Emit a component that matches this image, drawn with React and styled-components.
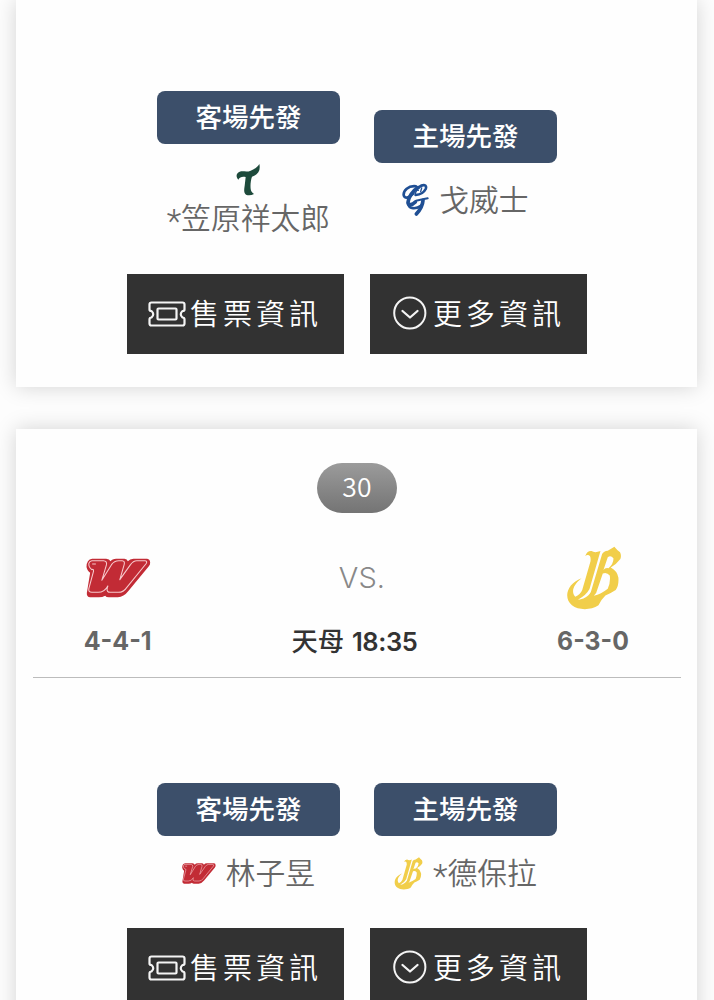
import React from 'react'
import styled, { createGlobalStyle } from 'styled-components';

const GlobalStyle = createGlobalStyle`
  html, body {
    margin: 0;
    background: #fdfdfd;
  }

  * {
    box-sizing: border-box;
  }
`;

// team logos
function Dragons() {
  return (
    <Logo w={24} h={32} viewBox="289 250 72 96">
      <path fill="#1d4a3b" d="M359 250 C363 267 357 282 337 288 C332 301 331 324 335 332 Q338 337 343 340 Q330 347 319 342 C312 337 313 328 315 315 L318 289 C307 287 301 289 296 297 C288 288 289 277 300 273 C310 270 322 275 333 270 C346 265 354 259 359 250Z" />
    </Logo>
  )
}

function Guardians() {
  return (
    <Logo w={27} h={34} viewBox="128 249 81 102">
      <g fill="none" stroke="#1f4f94" strokeLinecap="round" strokeLinejoin="round">
        <path strokeWidth="8" d="M170 259 C146 256 132 273 133 285 C135 298 150 294 162 280" />
        <path strokeWidth="11" d="M176 263 C159 273 147 293 146 307 C147 317 158 316 168 306" />
        <path strokeWidth="8" d="M178 262 C193 251 204 255 199 267 C194 277 181 284 169 285" />
        <path strokeWidth="4" d="M168 285 C168 274 174 268 177 271 M184 275 L187 264" />
        <path strokeWidth="6" d="M170 302 Q186 299 205 295" />
        <path strokeWidth="11" d="M191 301 C190 317 183 329 171 342" />
        <path strokeWidth="8" d="M146 311 C150 328 169 328 186 317" />
      </g>
    </Logo>
  )
}

function Dragon({ w, h }) {
  return (
    <Logo w={w} h={h} viewBox="79 84 194 120">
      <path fill="#c22b35" d="M97 86 H139 Q149 87 152 94 Q157 86 169 86 H194 Q202 87 204 94 Q210 86 221 86 H262 Q271 87 271 98 Q271 104 267 109 L205 184 Q192 201 174 202 H147 Q139 202 136 197 Q128 202 117 202 H91 Q80 201 81 189 L91 128 Q83 124 80 111 Q80 88 97 86Z" />
      <path fill="none" stroke="#f7c9cc" strokeWidth="3.200" strokeLinejoin="round" d="M96 92 H131 Q142 93 140 104 L126 151 L155 104 Q163 92 177 92 H187 Q196 93 193 104 L180 149 L212 104 Q220 92 231 92 H256 Q264 94 258 102 L201 172 Q191 187 176 187 H151 Q140 187 142 175 L144 168 Q134 187 115 187 H96 Q85 187 87 176 L101 124 Q102 116 96 119 Q86 111 87 100 Q89 93 96 92Z M97 102 H108" />
    </Logo>
  )
}

function Brothers({ w, h }) {
  return (
    <Logo w={w} h={h} viewBox="77 45 167 193">
      <path fill="#f1ce4a" fillRule="evenodd" d="M134 76 Q139 59 153 60 Q163 67 180 60 L147 175 Q137 194 112 207 C127 207 143 198 151 184 L185 69 Q190 60 202 59 L222 47 Q229 56 239 64 Q244 74 240 84 Q226 102 211 110 Q231 121 234 140 Q236 164 226 178 Q211 188 195 194 Q183 205 174 224 C150 240 113 239 94 224 C67 201 79 158 123 142 C97 162 91 184 104 198 Q119 192 125 178 L150 91 Q152 74 143 72 Q138 71 134 76Z M202 79 L189 117 Q194 110 204 112 Q220 98 219 82 Q211 72 202 79Z M187 128 L167 187 L160 195 Q182 190 202 174 Q211 153 208 134 Q199 123 187 128Z" />
    </Logo>
  )
}

function TicketIcon() {
  return (
    <Logo w={38} h={27} viewBox="0 0 38 27">
      <g fill="none" stroke="#f4f4f4" strokeWidth="2.200" strokeLinejoin="round">
        <path d="M3.500 1.500 H34.500 Q36.500 1.500 36.500 3.500 V8.500 Q36.500 10 34.500 10 Q31 13 34.500 16.500 Q36.500 16.500 36.500 18.500 V22.500 Q36.500 24.500 34.500 24.500 H3.500 Q1.500 24.500 1.500 22.500 V18.500 Q1.500 16.500 3.500 16.500 Q7 13 3.500 10 Q1.500 10 1.500 8.500 V3.500 Q1.500 1.500 3.500 1.500Z" />
        <rect x="9.500" y="7.500" width="19" height="11" rx="1" />
      </g>
    </Logo>
  )
}

function MoreIcon() {
  return (
    <Logo w={34} h={36} viewBox="0 0 34 36">
      <circle cx="16.800" cy="17" r="15.600" fill="none" stroke="#f4f4f4" strokeWidth="2" />
      <path d="M9.500 15 L17 21.500 L24.500 15" fill="none" stroke="#f4f4f4" strokeWidth="2.300" strokeLinecap="round" strokeLinejoin="round" />
    </Logo>
  )
}

function Starter(props) {
  return (
    <StarterColumn>
      <Pill>{props.label}</Pill>
      <Player $stacked={props.stacked}>
        {props.logo}
        <PlayerName>{props.star && <Star>*</Star>}{props.name}</PlayerName>
      </Player>
    </StarterColumn>
  )
}

function Actions() {
  return (
    <ButtonRow>
      <DarkButton><TicketIcon /><ButtonText $gap={4}>售票資訊</ButtonText></DarkButton>
      <DarkButton><MoreIcon /><ButtonText $gap={6}>更多資訊</ButtonText></DarkButton>
    </ButtonRow>
  )
}

function App() {
  return (
    <Page>
      <GlobalStyle />
      <Card height={387}>
        <Starters top={91} height={149}>
          <Starter label="客場先發" name="笠原祥太郎" logo={<Dragons />} star stacked />
          <Starter label="主場先發" name="戈威士" logo={<Guardians />} />
        </Starters>
        <Actions />
      </Card>

      <Card height={640}>
        <GameNumber>30</GameNumber>
        <Match>
          <Team>
            <TeamLogo $left={1}><Dragon w={65} h={40} /></TeamLogo>
            <Record scale={0.98}>4-4-1</Record>
          </Team>
          <Info>
            <Versus>VS.</Versus>
            <Place>天母 <Time>18:35</Time></Place>
          </Info>
          <Team>
            <TeamLogo $left={-4}><Brothers w={56} h={64} /></TeamLogo>
            <Record $left={-6} scale={0.97}>6-3-0</Record>
          </Team>
        </Match>
        <Starters top={105} height={111}>
          <Starter label="客場先發" name="林子昱" logo={<Dragon w={34} h={21} />} />
          <Starter label="主場先發" name="德保拉" logo={<Brothers w={29} h={33} />} star />
        </Starters>
        <Actions />
      </Card>
    </Page>
  )
}

const Page = styled.div`
  width: 714px;
  height: 1000px;
  overflow: hidden;
  display: flex;
  flex-direction: column;
  gap: 42px;
  padding-left: 16.4px;
  font-family: "Noto Sans CJK TC", sans-serif;
  color: #666;
`;

const Card = styled.div`
  width: 681px;
  height: ${props => props.height}px;
  flex: none;
  display: flex;
  flex-direction: column;
  align-items: center;
  background: #fefefe;
  box-shadow: 0 0 20px rgba(0, 0, 0, 0.17);
`;

const Logo = styled.svg.attrs(props => ({ width: props.w, height: props.h }))`
  display: block;
  flex: none;
`;

const Starters = styled.div`
  display: flex;
  align-items: center;
  gap: 34px;
  height: ${props => props.height}px;
  margin-top: ${props => props.top}px;
  margin-bottom: 34px;
`;

const StarterColumn = styled.div`
  width: 183px;
  display: flex;
  flex-direction: column;
  align-items: center;
`;

const Pill = styled.div`
  width: 183px;
  height: 53px;
  border-radius: 8px;
  background: #3c4f6a;
  color: #fff;
  font-size: 26.5px;
  font-weight: 500;
  line-height: 49px;
  text-align: center;
`;

const Player = styled.div`
  display: flex;
  flex-direction: ${props => props.$stacked ? 'column' : 'row'};
  align-items: center;
  gap: ${props => props.$stacked ? 4 : 10}px;
  height: ${props => props.$stacked ? 96 : 58}px;
  padding-top: ${props => props.$stacked ? 20 : 16}px;
  font-size: 29.8px;
  font-weight: 350;
  line-height: 40px;
  white-space: nowrap;
`;

const PlayerName = styled.span`
  height: 40px;
  margin-top: -4px;
`;

const Star = styled.span`
  display: inline-block;
  height: 30px;
  font-family: Roboto, sans-serif;
  font-size: 34px;
  font-weight: 300;
  line-height: 30px;
  vertical-align: -4px;
`;

const ButtonRow = styled.div`
  display: flex;
  gap: 26px;
`;

const DarkButton = styled.button`
  display: flex;
  align-items: center;
  width: 217px;
  height: 80px;
  padding: 0 0 0 21px;
  border: none;
  background: #323232;
  color: #fff;
  font-family: inherit;

  & + & {
    padding-left: 23px;
  }
`;

const ButtonText = styled.span`
  margin-left: ${props => props.$gap}px;
  padding-bottom: 4px;
  font-size: 29px;
  font-weight: 350;
  letter-spacing: 4px;
  line-height: 40px;
  white-space: nowrap;
`;

const GameNumber = styled.div`
  width: 80px;
  height: 50px;
  margin-top: 34px;
  border-radius: 25px;
  background: linear-gradient(#9b9b9b, #747474);
  color: #fff;
  font-size: 26.5px;
  font-weight: 350;
  line-height: 46px;
  text-align: center;
`;

const Match = styled.div`
  display: flex;
  justify-content: space-between;
  width: 648px;
  height: 165px;
  border-bottom: 1px solid #bcbcbc;
`;

const Team = styled.div`
  width: 170px;
  display: flex;
  flex-direction: column;
  align-items: center;
`;

const TeamLogo = styled.div`
  height: 64px;
  margin-top: 33px;
  margin-left: ${props => props.$left}px;
  display: flex;
  align-items: center;
`;

const Record = styled.div`
  margin-top: 15px;
  margin-left: ${props => props.$left || 0}px;
  font-family: Inter, sans-serif;
  font-size: 25.5px;
  font-weight: 700;
  line-height: 32px;
  transform: scaleX(${props => props.scale});
`;

const Info = styled.div`
  display: flex;
  flex-direction: column;
  align-items: center;
  width: 200px;
`;

const Versus = styled.div`
  margin: 45px 0 0 10px;
  font-family: Inter, sans-serif;
  font-size: 29px;
  font-weight: 300;
  line-height: 40px;
  color: #888;
`;

const Place = styled.div`
  margin: 22px 5px 0 0;
  font-size: 26.3px;
  font-weight: 500;
  line-height: 40px;
  color: #333;
  white-space: nowrap;
`;

const Time = styled.span`
  margin-left: 2px;
  font-family: Inter, sans-serif;
  font-size: 25.5px;
  font-weight: 600;
  letter-spacing: -0.4px;
`;

export default App
